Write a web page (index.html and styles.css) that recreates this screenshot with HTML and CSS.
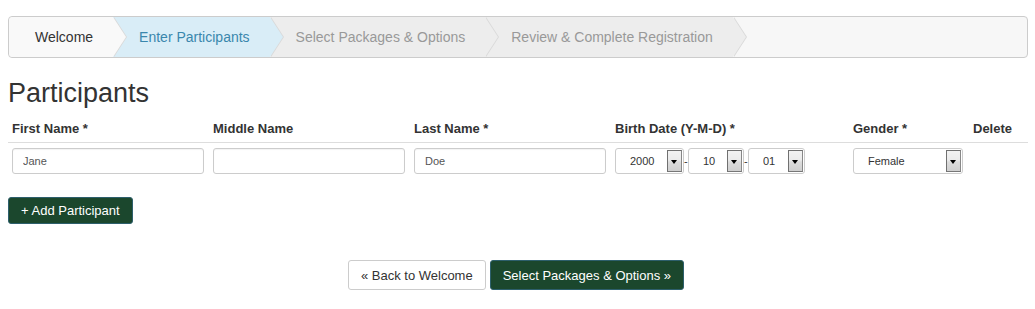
FILE: index.html
```html
<!DOCTYPE html>
<html lang="en">
<head>
    <meta charset="UTF-8">
    <title>Registration - Participants</title>
    <link rel="stylesheet" href="styles.css">
</head>
<body>

<div class="page">
    <ul class="wizard">
        <li class="done">Welcome</li>
        <li class="active">Enter Participants</li>
        <li>Select Packages &amp; Options</li>
        <li>Review &amp; Complete Registration</li>
    </ul>

    <h1 class="heading">Participants</h1>

    <table class="participants">
        <colgroup>
            <col style="width: 201px">
            <col style="width: 201px">
            <col style="width: 201px">
            <col style="width: 238px">
            <col style="width: 120px">
            <col>
        </colgroup>
        <thead>
            <tr>
                <th>First Name *</th>
                <th>Middle Name</th>
                <th>Last Name *</th>
                <th>Birth Date (Y-M-D) *</th>
                <th>Gender *</th>
                <th>Delete</th>
            </tr>
        </thead>
        <tbody>
            <tr>
                <td><input type="text" class="field" value="Jane"></td>
                <td><input type="text" class="field" value=""></td>
                <td><input type="text" class="field" value="Doe"></td>
                <td>
                    <div class="date">
                        <span class="pick pick-year">
                            <select><option>2000</option></select>
                            <span class="pick-btn"></span>
                        </span>
                        <span class="sep">-</span>
                        <span class="pick pick-month">
                            <select><option>10</option></select>
                            <span class="pick-btn"></span>
                        </span>
                        <span class="sep">-</span>
                        <span class="pick pick-day">
                            <select><option>01</option></select>
                            <span class="pick-btn"></span>
                        </span>
                    </div>
                </td>
                <td>
                    <span class="pick pick-gender">
                        <select><option>Female</option></select>
                        <span class="pick-btn"></span>
                    </span>
                </td>
                <td></td>
            </tr>
        </tbody>
    </table>

    <button class="btn btn-green add-btn">+ Add Participant</button>

    <div class="nav-buttons">
        <button class="btn btn-light">&laquo; Back to Welcome</button>
        <button class="btn btn-green">Select Packages &amp; Options &raquo;</button>
    </div>
</div>

</body>
</html>
```

FILE: styles.css
```css
body {
    font-family: "Liberation Sans", Arial, sans-serif;
    font-size: 13px;
    color: #333;
    margin: 0;
    padding: 0;
    background-color: #fff;
}

.page {
    width: 1020px;
    padding: 16px 7px 0 8px;
}

/* wizard steps */
.wizard {
    display: flex;
    list-style: none;
    margin: 0 0 20px;
    padding: 0;
    height: 40px;
    border: 1px solid #ccc;
    border-radius: 4px;
    background: #f7f7f7;
    font-size: 14px;
}

.wizard li {
    position: relative;
    line-height: 40px;
    padding: 0 20px 0 26px;
    background: #ededed;
    color: #999;
}

.wizard li:nth-child(1) { z-index: 4; border-radius: 4px 0 0 4px; }
.wizard li:nth-child(2) { z-index: 3; }
.wizard li:nth-child(3) { z-index: 2; }
.wizard li:nth-child(4) { z-index: 1; }

.wizard li::before,
.wizard li::after {
    content: "";
    position: absolute;
    top: 0;
    border-top: 20px solid transparent;
    border-bottom: 20px solid transparent;
    border-left: 13px solid #d9d9d9;
    right: -14px;
}

.wizard li::after {
    border-left-color: #ededed;
    right: -13px;
}

.wizard li.done {
    background: #f9f9f9;
    color: #333;
}

.wizard li.done::after {
    border-left-color: #f9f9f9;
}

.wizard li.active {
    background: #d9edf7;
    color: #3a87ad;
}

.wizard li.active::after {
    border-left-color: #d9edf7;
}

.heading {
    font-size: 27px;
    font-weight: normal;
    line-height: 30px;
    margin: 0 0 8px;
    color: #333;
}

/* participants table */
.participants {
    width: 1020px;
    table-layout: fixed;
    border-collapse: collapse;
}

.participants th {
    text-align: left;
    font-weight: bold;
    line-height: 18px;
    padding: 4px 4px;
    border-bottom: 1px solid #ddd;
}

.participants td {
    padding: 5px 4px;
    vertical-align: top;
}

.field {
    box-sizing: border-box;
    width: 192px;
    height: 26px;
    padding: 0 10px;
    font-family: inherit;
    font-size: 11px;
    color: #555;
    border: 1px solid #ccc;
    border-radius: 3px;
    box-shadow: inset 0 1px 1px rgba(0, 0, 0, 0.05);
}

.date {
    display: flex;
    align-items: center;
}

.sep {
    width: 4px;
    font-size: 11px;
    color: #333;
}

.pick {
    box-sizing: border-box;
    display: flex;
    height: 26px;
    padding: 1px 1px 1px 0;
    border: 1px solid #ccc;
    border-radius: 3px;
    background: #fff;
}

.pick select {
    flex: 1;
    min-width: 0;
    border: none;
    background: transparent;
    appearance: none;
    -webkit-appearance: none;
    font-family: inherit;
    font-size: 11px;
    color: #333;
    padding: 0 0 0 14px;
    outline: none;
}

.pick-btn {
    position: relative;
    box-sizing: border-box;
    width: 15px;
    border: 1px solid #707070;
    border-right-color: #888;
    border-bottom-color: #777;
    background: linear-gradient(#f2f2f2, #ebebeb 45%, #dcdcdc 55%, #cfcfcf);
}

.pick-btn::after {
    content: "";
    position: absolute;
    left: 3px;
    top: 9px;
    border-left: 3.5px solid transparent;
    border-right: 3.5px solid transparent;
    border-top: 4px solid #000;
}

.pick-year { width: 69px; }
.pick-month { width: 56px; }
.pick-day { width: 57px; }
.pick-gender { width: 110px; }

/* buttons */
.btn {
    font-family: inherit;
    font-size: 13px;
    line-height: 17px;
    border-radius: 3px;
    cursor: pointer;
}

.btn-green {
    background-color: #1b472d;
    border: 1px solid #2d5f6c;
    color: #fff;
}

.btn-green:hover {
    background-color: #14371f;
}

.btn-light {
    background-color: #fff;
    border: 1px solid #ccc;
    color: #333;
}

.add-btn {
    margin-top: 18px;
    height: 27px;
    padding: 0 12px;
}

.nav-buttons {
    display: flex;
    justify-content: center;
    gap: 4px;
    margin-top: 36px;
    padding-right: 4px;
}

.nav-buttons .btn {
    height: 30px;
    padding: 0 12px;
}
```
